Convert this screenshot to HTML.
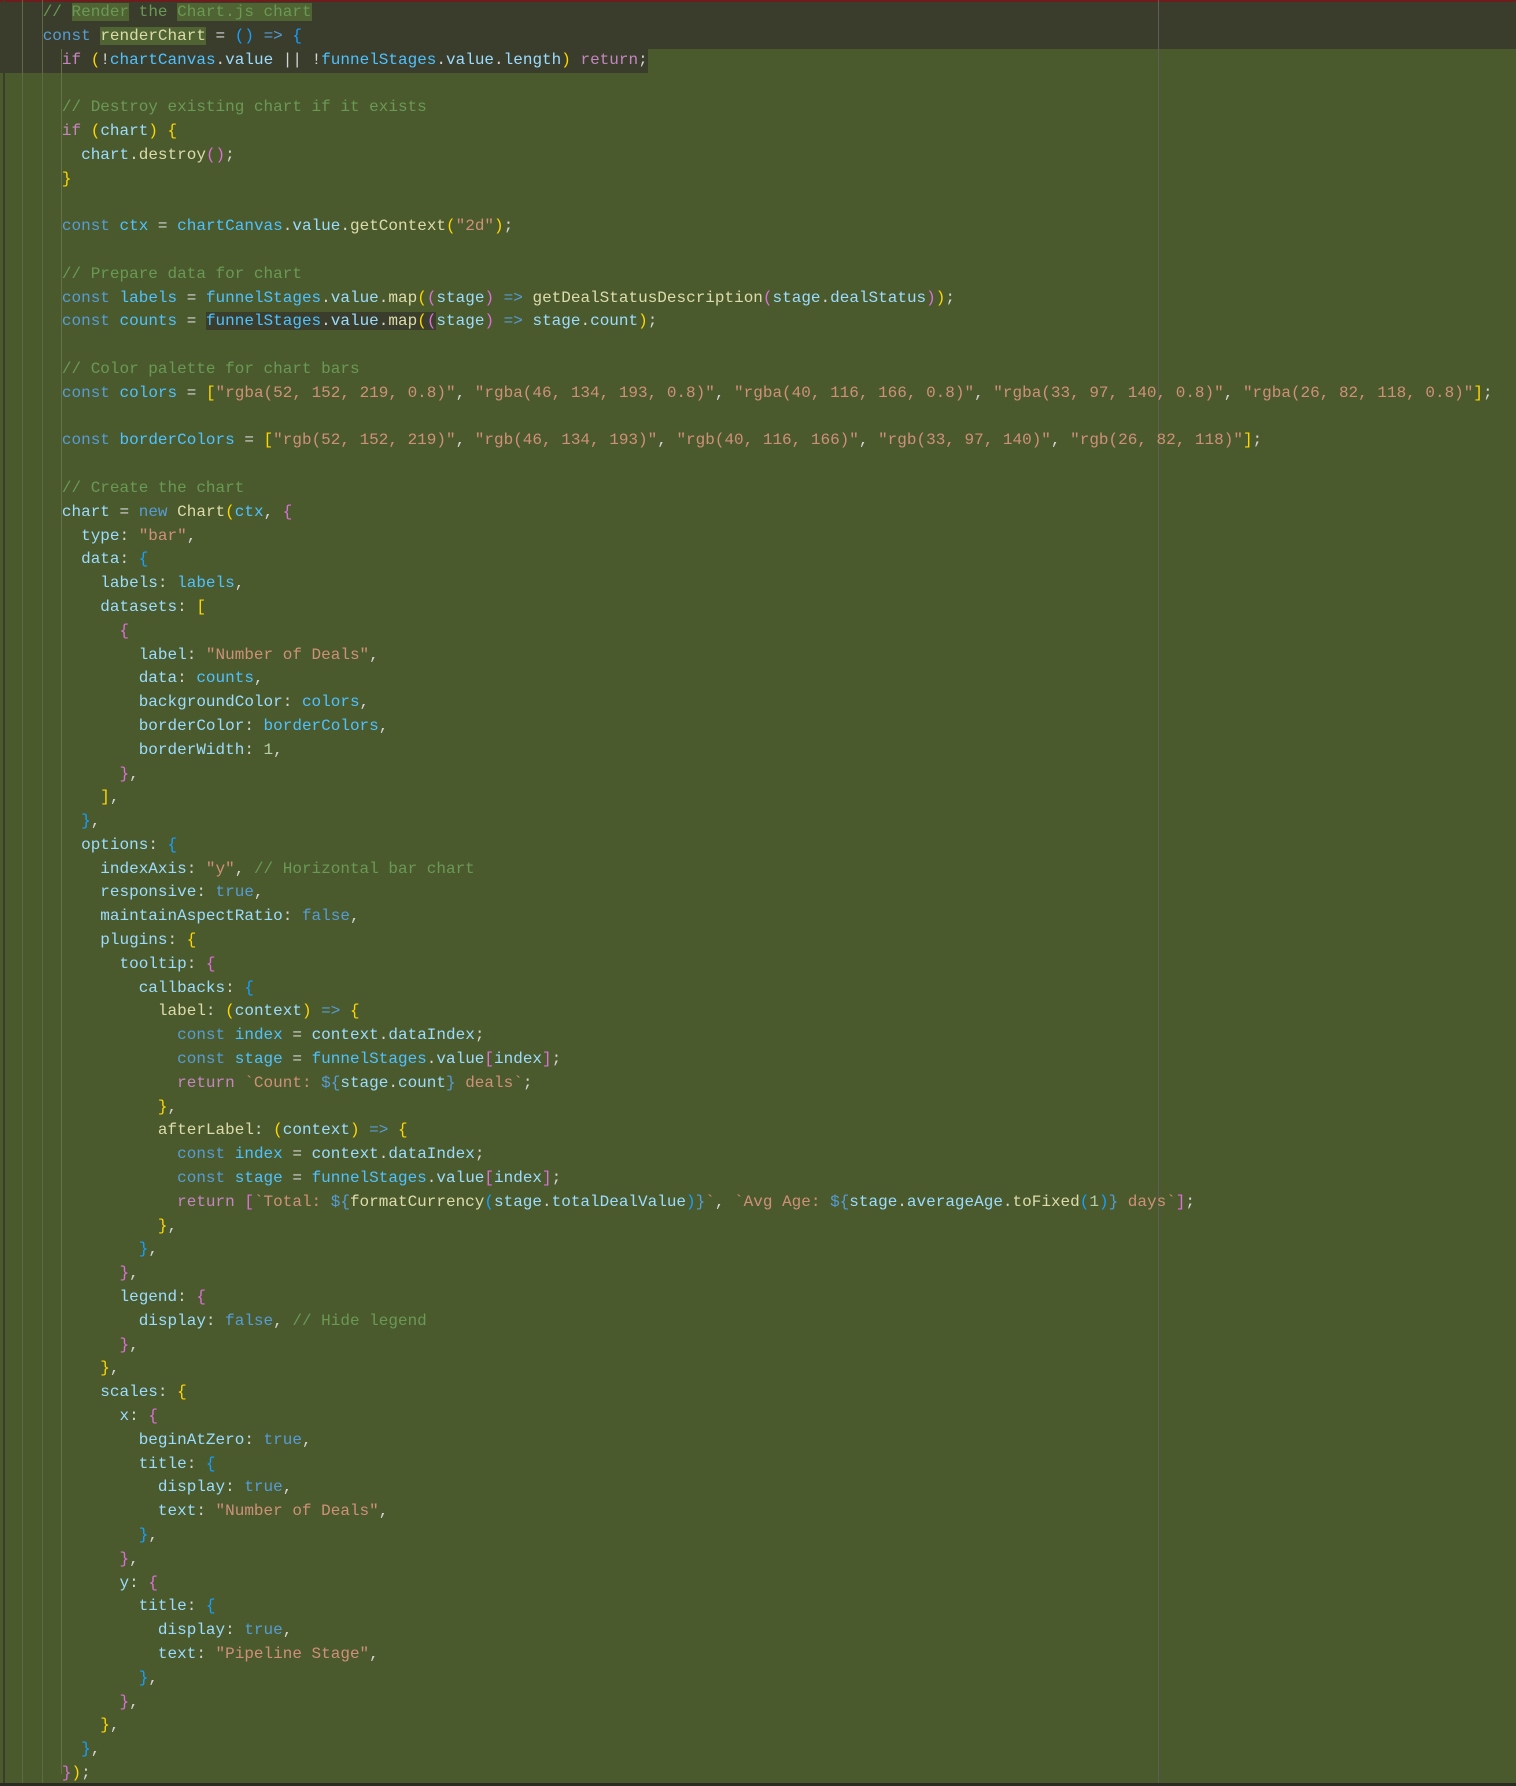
<!DOCTYPE html>
<html><head><meta charset="utf-8"><style>
html,body{margin:0;padding:0;}
body{width:1516px;height:1786px;background:#4b5a2d;position:relative;overflow:hidden;font-family:"Liberation Mono",monospace;}
.topbar{position:absolute;left:0;top:0;width:1516px;height:2px;background:#6e1c1c;}
.dark{position:absolute;background:#3a3d2c;}
.vl{position:absolute;top:0;width:1px;height:1783px;}
.bot{position:absolute;left:0;top:1783px;width:1516px;height:3px;background:#2a2c22;}
pre{position:absolute;left:42.7px;top:1px;margin:0;font-size:16px;line-height:23.8px;color:#d4d4d4;font-family:"Liberation Mono",monospace;}
.c{color:#6a9955}.k{color:#569cd6}.v{color:#9cdcfe}.cv{color:#4fc1ff}.f{color:#dcdcaa}.s{color:#ce9178}.p{color:#c586c0}
.b1{color:#ffd700}.b2{color:#da70d6}.b3{color:#179fff}.n{color:#b5cea8}
.hl{background:#4f6432}.hd{background:#3a3d2c}
</style></head><body>
<div class="topbar"></div>
<div class="dark" style="left:0;top:2px;width:1516px;height:47px"></div>
<div class="dark" style="left:0;top:49px;width:648px;height:24px"></div>
<div class="vl" style="left:3px;background:#3a3d2c;width:2px"></div>
<div class="vl" style="left:22px;background:#5f6a45"></div>
<div class="vl" style="left:42px;background:#5f6a45"></div>
<div class="vl" style="left:1158px;background:#5d5d5d"></div>
<div class="vl" style="left:61px;top:49px;height:1725px;background:#66704a"></div>
<div class="bot"></div>
<pre><span class="c">// <span class="hl">Render</span> the <span class="hl">Chart.js chart</span></span>
<span class="k">const</span> <span class="f hl">renderChart</span> = <span class="b3">()</span> <span class="k">=&gt;</span> <span class="b3">{</span>
  <span class="p">if</span> <span class="b1">(</span>!<span class="cv">chartCanvas</span>.<span class="v">value</span> || !<span class="cv">funnelStages</span>.<span class="v">value</span>.<span class="v">length</span><span class="b1">)</span> <span class="p">return</span>;

  <span class="c">// Destroy existing chart if it exists</span>
  <span class="p">if</span> <span class="b1">(</span><span class="v">chart</span><span class="b1">)</span> <span class="b1">{</span>
    <span class="v">chart</span>.<span class="f">destroy</span><span class="b2">()</span>;
  <span class="b1">}</span>

  <span class="k">const</span> <span class="cv">ctx</span> = <span class="cv">chartCanvas</span>.<span class="v">value</span>.<span class="f">getContext</span><span class="b1">(</span><span class="s">"2d"</span><span class="b1">)</span>;

  <span class="c">// Prepare data for chart</span>
  <span class="k">const</span> <span class="cv">labels</span> = <span class="cv">funnelStages</span>.<span class="v">value</span>.<span class="f">map</span><span class="b1">(</span><span class="b2">(</span><span class="v">stage</span><span class="b2">)</span> <span class="k">=&gt;</span> <span class="f">getDealStatusDescription</span><span class="b2">(</span><span class="v">stage</span>.<span class="v">dealStatus</span><span class="b2">)</span><span class="b1">)</span>;
  <span class="k">const</span> <span class="cv">counts</span> = <span class="cv hd">funnelStages</span><span class="hd">.<span class="v">value</span>.<span class="f">map</span><span class="b1">(</span><span class="b2">(</span></span><span class="v">stage</span><span class="b2">)</span> <span class="k">=&gt;</span> <span class="v">stage</span>.<span class="v">count</span><span class="b1">)</span>;

  <span class="c">// Color palette for chart bars</span>
  <span class="k">const</span> <span class="cv">colors</span> = <span class="b1">[</span><span class="s">"rgba(52, 152, 219, 0.8)"</span>, <span class="s">"rgba(46, 134, 193, 0.8)"</span>, <span class="s">"rgba(40, 116, 166, 0.8)"</span>, <span class="s">"rgba(33, 97, 140, 0.8)"</span>, <span class="s">"rgba(26, 82, 118, 0.8)"</span><span class="b1">]</span>;

  <span class="k">const</span> <span class="cv">borderColors</span> = <span class="b1">[</span><span class="s">"rgb(52, 152, 219)"</span>, <span class="s">"rgb(46, 134, 193)"</span>, <span class="s">"rgb(40, 116, 166)"</span>, <span class="s">"rgb(33, 97, 140)"</span>, <span class="s">"rgb(26, 82, 118)"</span><span class="b1">]</span>;

  <span class="c">// Create the chart</span>
  <span class="v">chart</span> = <span class="k">new</span> <span class="f">Chart</span><span class="b1">(</span><span class="cv">ctx</span>, <span class="b2">{</span>
    <span class="v">type</span>: <span class="s">"bar"</span>,
    <span class="v">data</span>: <span class="b3">{</span>
      <span class="v">labels</span>: <span class="cv">labels</span>,
      <span class="v">datasets</span>: <span class="b1">[</span>
        <span class="b2">{</span>
          <span class="v">label</span>: <span class="s">"Number of Deals"</span>,
          <span class="v">data</span>: <span class="cv">counts</span>,
          <span class="v">backgroundColor</span>: <span class="cv">colors</span>,
          <span class="v">borderColor</span>: <span class="cv">borderColors</span>,
          <span class="v">borderWidth</span>: <span class="n">1</span>,
        <span class="b2">}</span>,
      <span class="b1">]</span>,
    <span class="b3">}</span>,
    <span class="v">options</span>: <span class="b3">{</span>
      <span class="v">indexAxis</span>: <span class="s">"y"</span>, <span class="c">// Horizontal bar chart</span>
      <span class="v">responsive</span>: <span class="k">true</span>,
      <span class="v">maintainAspectRatio</span>: <span class="k">false</span>,
      <span class="v">plugins</span>: <span class="b1">{</span>
        <span class="v">tooltip</span>: <span class="b2">{</span>
          <span class="v">callbacks</span>: <span class="b3">{</span>
            <span class="f">label</span>: <span class="b1">(</span><span class="v">context</span><span class="b1">)</span> <span class="k">=&gt;</span> <span class="b1">{</span>
              <span class="k">const</span> <span class="cv">index</span> = <span class="v">context</span>.<span class="v">dataIndex</span>;
              <span class="k">const</span> <span class="cv">stage</span> = <span class="cv">funnelStages</span>.<span class="v">value</span><span class="b2">[</span><span class="v">index</span><span class="b2">]</span>;
              <span class="p">return</span> <span class="s">`Count: </span><span class="k">${</span><span class="v">stage</span>.<span class="v">count</span><span class="k">}</span><span class="s"> deals`</span>;
            <span class="b1">}</span>,
            <span class="f">afterLabel</span>: <span class="b1">(</span><span class="v">context</span><span class="b1">)</span> <span class="k">=&gt;</span> <span class="b1">{</span>
              <span class="k">const</span> <span class="cv">index</span> = <span class="v">context</span>.<span class="v">dataIndex</span>;
              <span class="k">const</span> <span class="cv">stage</span> = <span class="cv">funnelStages</span>.<span class="v">value</span><span class="b2">[</span><span class="v">index</span><span class="b2">]</span>;
              <span class="p">return</span> <span class="b2">[</span><span class="s">`Total: </span><span class="k">${</span><span class="f">formatCurrency</span><span class="b3">(</span><span class="v">stage</span>.<span class="v">totalDealValue</span><span class="b3">)</span><span class="k">}</span><span class="s">`</span>, <span class="s">`Avg Age: </span><span class="k">${</span><span class="v">stage</span>.<span class="v">averageAge</span>.<span class="f">toFixed</span><span class="b3">(</span><span class="n">1</span><span class="b3">)</span><span class="k">}</span><span class="s"> days`</span><span class="b2">]</span>;
            <span class="b1">}</span>,
          <span class="b3">}</span>,
        <span class="b2">}</span>,
        <span class="v">legend</span>: <span class="b2">{</span>
          <span class="v">display</span>: <span class="k">false</span>, <span class="c">// Hide legend</span>
        <span class="b2">}</span>,
      <span class="b1">}</span>,
      <span class="v">scales</span>: <span class="b1">{</span>
        <span class="v">x</span>: <span class="b2">{</span>
          <span class="v">beginAtZero</span>: <span class="k">true</span>,
          <span class="v">title</span>: <span class="b3">{</span>
            <span class="v">display</span>: <span class="k">true</span>,
            <span class="v">text</span>: <span class="s">"Number of Deals"</span>,
          <span class="b3">}</span>,
        <span class="b2">}</span>,
        <span class="v">y</span>: <span class="b2">{</span>
          <span class="v">title</span>: <span class="b3">{</span>
            <span class="v">display</span>: <span class="k">true</span>,
            <span class="v">text</span>: <span class="s">"Pipeline Stage"</span>,
          <span class="b3">}</span>,
        <span class="b2">}</span>,
      <span class="b1">}</span>,
    <span class="b3">}</span>,
  <span class="b2">}</span><span class="b1">)</span>;</pre>
</body></html>
